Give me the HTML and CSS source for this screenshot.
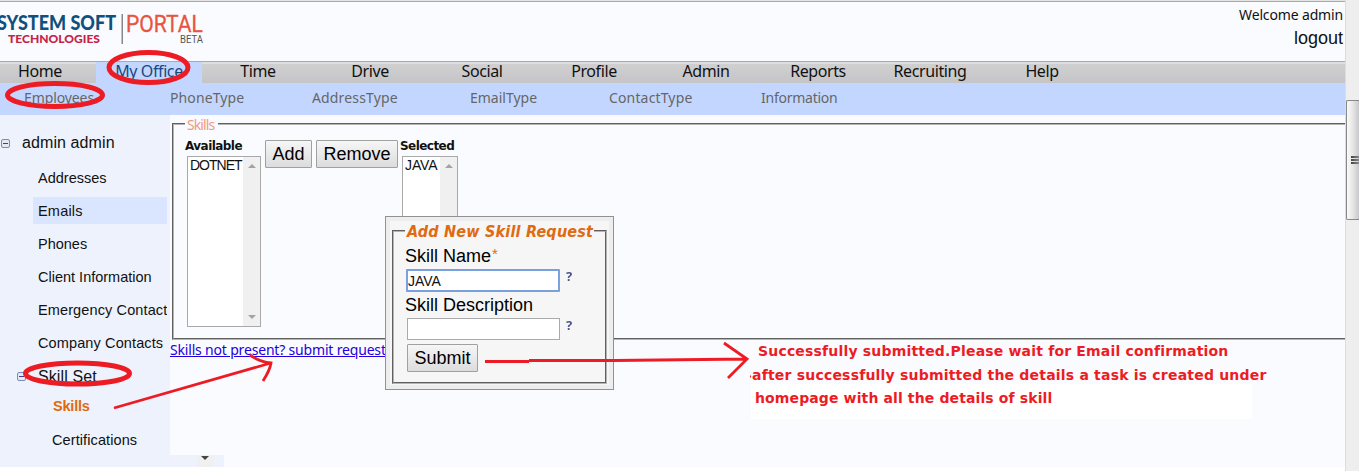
FILE: index.html
```
<!DOCTYPE html>
<html lang="en">
<head>
<meta charset="utf-8">
<title>System Soft Technologies Portal</title>
<link rel="stylesheet" href="styles.css">
</head>
<body>
<div class="window">
  <div class="page">
    <header class="header">
      <svg class="logo" width="210" height="48" viewBox="0 0 210 48">
        <text class="logo-name" x="-3" y="29.500" textLength="119" lengthAdjust="spacingAndGlyphs">SYSTEM SOFT</text>
        <text class="logo-tech" x="8" y="43" textLength="92" lengthAdjust="spacingAndGlyphs">TECHNOLOGIES</text>
        <rect class="logo-rule" x="121.500" y="14" width="1.500" height="30"/>
        <text class="logo-portal" x="126" y="31.500" textLength="77" lengthAdjust="spacingAndGlyphs">PORTAL</text>
        <text class="logo-beta" x="180" y="43" textLength="23" lengthAdjust="spacingAndGlyphs">BETA</text>
      </svg>
      <div class="account">
        <span class="welcome">Welcome admin</span>
        <a class="logout">logout</a>
      </div>
    </header>
    <nav class="nav">
      <a class="nav-item nav-home">Home</a>
      <a class="nav-item nav-active">My Office</a>
      <a class="nav-item">Time</a>
      <a class="nav-item">Drive</a>
      <a class="nav-item">Social</a>
      <a class="nav-item">Profile</a>
      <a class="nav-item">Admin</a>
      <a class="nav-item">Reports</a>
      <a class="nav-item">Recruiting</a>
      <a class="nav-item">Help</a>
    </nav>
    <nav class="subnav">
      <a class="sub-employees">Employees</a>
      <a class="sub-phone">PhoneType</a>
      <a class="sub-address">AddressType</a>
      <a class="sub-email">EmailType</a>
      <a class="sub-contact">ContactType</a>
      <a class="sub-info">Information</a>
    </nav>
    <div class="body">
      <aside class="sidebar">
        <div class="root"><i class="toggle"></i><span>admin admin</span></div>
        <a class="leaf">Addresses</a>
        <a class="leaf leaf-hover">Emails</a>
        <a class="leaf">Phones</a>
        <a class="leaf">Client Information</a>
        <a class="leaf leaf-wide">Emergency Contact</a>
        <a class="leaf leaf-wide">Company Contacts</a>
        <div class="group"><i class="toggle"></i><span>Skill Set</span></div>
        <a class="child child-active">Skills</a>
        <a class="child child-cert">Certifications</a>
      </aside>
      <main class="main">
        <section class="skills">
          <h2 class="legend">Skills</h2>
          <div class="picker">
            <div class="column column-available">
              <b class="caption">Available</b>
              <div class="list list-available"><span>DOTNET</span><div class="track"><i class="up"></i><i class="down"></i></div></div>
            </div>
            <button class="btn btn-add">Add</button>
            <button class="btn btn-remove">Remove</button>
            <div class="column column-selected">
              <b class="caption">Selected</b>
              <div class="list list-selected"><span>JAVA</span><div class="track"><i class="up"></i><i class="down"></i></div></div>
            </div>
          </div>
        </section>
        <a class="request-link">Skills not present? submit request</a>
        <div class="tail"><div class="tail-track"><i class="down down-dark"></i></div></div>
      </main>
    </div>
  </div>
  <div class="scrollbar"><div class="thumb"><i></i><i></i><i></i></div></div>
</div>

<div class="dialog">
  <div class="dialog-inner">
    <div class="dialog-box">
      <h3 class="dialog-title">Add New Skill Request</h3>
      <label class="label">Skill Name<sup>*</sup></label>
      <div class="field"><div class="input input-focus">JAVA</div><span class="hint">?</span></div>
      <label class="label">Skill Description</label>
      <div class="field"><div class="input"></div><span class="hint">?</span></div>
      <button class="btn btn-submit">Submit</button>
    </div>
  </div>
</div>

<div class="note">
  <p class="note-1">Successfully submitted.Please wait for Email confirmation</p>
  <p class="note-2">after successfully submitted the details a task is created under</p>
  <p class="note-3">homepage with all the details of skill</p>
</div>

<svg class="marks" width="1359" height="471" viewBox="0 0 1359 471">
  <ellipse cx="148.500" cy="67.500" rx="39.500" ry="15" stroke-width="5"/>
  <ellipse cx="55" cy="95" rx="47.500" ry="11.500" stroke-width="5"/>
  <ellipse cx="77.500" cy="373.500" rx="52" ry="10.500" stroke-width="5"/>
  <path d="M114 408L271 363M250 355Q260 362 271 363Q270 370 263 381"/>
  <path d="M485 361.500H529M529 360.500H615L747 359M724 343L747 359L728 378"/>
  <path d="M750 376.500H751" stroke-width="2"/>
</svg>
</body>
</html>
```
FILE: styles.css
```
* { box-sizing: border-box; }
body { margin: 0; width: 1359px; height: 471px; overflow: hidden; position: relative; background: #fff; color: #111; font-family: "Liberation Sans", Arial, sans-serif; }
.window { display: flex; height: 471px; }
.page { width: 1345px; height: 467px; background: #fafbff; overflow: hidden; }

.header { height: 61px; border-top: 1px solid #e3e3e3; display: flex; justify-content: space-between; box-shadow: inset 0 1px #aaa; }
.logo { margin-top: -1px; font-family: Lato, sans-serif; }
.logo-name { font-size: 20px; font-weight: 900; fill: #11507a; }
.logo-tech { font-size: 12px; font-weight: 900; fill: #c52348; }
.logo-rule { fill: #888; }
.logo-portal { font-family: Roboto, sans-serif; font-size: 23px; fill: #e8543f; stroke: #e8543f; stroke-width: 0.3px; }
.logo-beta { font-family: Roboto, sans-serif; font-size: 11px; fill: #555; }
.account { display: flex; flex-direction: column; align-items: flex-end; padding: 4px 2px 0 0; }
.welcome { font: 14px/20px "Noto Sans", sans-serif; letter-spacing: -0.15px; }
.logout { font-size: 18px; line-height: 24px; margin-top: 1px; }

.nav { height: 22px; display: flex; border-top: 1px solid #aaa; background: linear-gradient(#dedede 0 2px, #d0d0d1 2px, #c5c4c7); font: 16px/18px "Noto Sans", sans-serif; letter-spacing: -0.4px; }
.nav-item { width: 112px; text-align: center; }
.nav-home { width: 96px; padding-right: 16px; }
.nav-active { width: 106px; background: #c3d6ff; color: #17497f; }
.subnav { height: 32px; background: #c3d6ff; display: flex; padding-left: 24px; color: #666; font: 14px/30px "Noto Sans", sans-serif; letter-spacing: -0.1px; }
.sub-employees { width: 146px; }
.sub-phone { width: 142px; letter-spacing: 0.1px; }
.sub-address { width: 158px; letter-spacing: 0.15px; }
.sub-email { width: 139px; letter-spacing: 0; }
.sub-contact { width: 152px; letter-spacing: 0.15px; }
.sub-info { letter-spacing: -0.25px; }

.body { display: flex; height: 352px; }
.sidebar { width: 170px; background: #edf2fc; }
.root { display: flex; align-items: center; gap: 12px; height: 56px; padding-left: 1px; font-size: 16px; letter-spacing: 0.1px; }
.toggle { width: 9px; height: 9px; border: 1px solid #7b8bc0; border-radius: 2px; background: linear-gradient(#34429a, #34429a) center / 5px 1px no-repeat, #e4e8f2; }
.leaf { display: block; height: 27px; line-height: 28px; margin: 0 3px 6px 33px; padding-left: 5px; white-space: nowrap; overflow: hidden; font-size: 14.5px; }
.root + .leaf { margin-top: -7px; }
.leaf-hover { letter-spacing: 0.2px; background: #dae5ff; }
.leaf-wide { letter-spacing: 0.12px; }
.group { display: flex; align-items: center; gap: 12px; height: 29px; padding-left: 17px; font-size: 16px; letter-spacing: 0.1px; }
.child { display: block; height: 34px; line-height: 30px; padding-left: 53px; font-size: 14.5px; }
.child-active { color: #e06a10; font-weight: bold; letter-spacing: -0.2px; }
.child-cert { padding-left: 52px; letter-spacing: 0.1px; }

.main { flex: 1; padding-top: 8px; }
.skills { position: relative; height: 217px; margin-left: 2px; border: 2px groove #b4b4b4; border-right: 0; padding: 15px 0 0 11px; }
.legend { position: absolute; left: 11px; top: -9px; margin: 0; padding: 0 4px 0 2px; background: #fafbff; color: #f09a7e; font: 14px/18px "Noto Sans", sans-serif; letter-spacing: -0.9px; }
.picker { display: flex; align-items: flex-start; }
.column { display: flex; flex-direction: column; }
.column-available { width: 80px; }
.column-selected { width: 60px; margin-left: 2px; }
.caption { font: bold 12px/13px "DejaVu Sans", sans-serif; letter-spacing: -0.55px; height: 16px; white-space: nowrap; }
.list { display: flex; justify-content: space-between; height: 171px; border: 1px solid #a9a9a9; background: #fff; margin-left: 2px; padding-left: 2px; font-size: 14px; line-height: 17px; }
.list-available { width: 74px; }
.list-selected { width: 56px; }
.list span { letter-spacing: -1px; width: 53px; }
.list-selected span { width: 35px; letter-spacing: -0.1px; }
.track { width: 17px; background: #f0f0f0; display: flex; flex-direction: column; justify-content: space-between; align-items: center; padding: 7px 0; }
.up, .down { border: 4px solid transparent; height: 0; width: 0; }
.up { border-top: 0; border-bottom-color: #a3a3a3; }
.down { border-bottom: 0; border-top-color: #a3a3a3; }
.down-dark { display: block; border-top-color: #444; }
.btn { height: 28px; padding: 0; border: 1px solid #a0a0a0; border-radius: 1px; background: linear-gradient(#f6f6f6, #dcdcdc); color: #000; font: 18px "Liberation Sans", Arial, sans-serif; }
.btn-add { width: 47px; }
.btn-remove { width: 82px; margin-left: 4px; }
.request-link { display: block; height: 20px; margin-bottom: 95px; color: #20d; text-decoration: underline; white-space: nowrap; font: 14px/20px "Noto Sans", sans-serif; letter-spacing: -0.18px; }
.tail { width: 54px; height: 12px; background: #edf2fc; padding-left: 27px; }
.tail-track { width: 17px; height: 12px; background: #f0f0f0; padding: 1px 0 0 4px; }

.scrollbar { width: 14px; height: 471px; background: #eee; border-left: 1px solid #ddd; padding-top: 100px; }
.thumb { height: 120px; border: 1px solid #888; border-right: 0; border-radius: 2px 0 0 2px; background: linear-gradient(90deg, #fafafa, #e8e8e8 45%, #c8c8cc); display: flex; flex-direction: column; align-items: flex-end; justify-content: center; gap: 1px; }
.thumb i { width: 8px; height: 2px; background: linear-gradient(90deg, #444, #888); }

.dialog { position: absolute; left: 385px; top: 216px; width: 229px; height: 174px; border: 1px solid #929292; background: #ededed; padding: 4px; }
.dialog-inner { height: 164px; background: #f6f6f6; padding: 9px 2px 1px; }
.dialog-box { position: relative; height: 154px; border: 2px groove #b4b4b4; padding: 12px 0 0 13px; }
.dialog-title { position: absolute; left: 11px; top: -11px; width: 189px; margin: 0; padding: 0 2px; background: #f6f6f6; white-space: nowrap; color: #e06a10; font: italic bold 16px/22px "DejaVu Sans Condensed", "DejaVu Sans", sans-serif; font-stretch: condensed; letter-spacing: 0.2px; }
.label { display: block; height: 24px; line-height: 24px; font-size: 18px; margin-left: -2px; color: #000; }
.label sup { font-size: 15px; line-height: 0; color: #e06a10; vertical-align: 3px; margin-left: 1px; }
.field { display: flex; height: 25px; gap: 6px; padding-top: 1px; }
.input { width: 153px; height: 22px; border: 1px solid #aaa; background: #fff; font-size: 14px; line-height: 21px; padding-left: 1px; }
.input-focus { width: 154px; height: 23px; margin-left: -1px; border: 2px solid #7aa0de; border-radius: 1px; line-height: 20px; padding-left: 0; }
.hint { font: bold 13px/15px "Noto Sans", sans-serif; background: linear-gradient(#46508a 70%, #c02040 70%); background-clip: text; color: transparent; }
.btn-submit { width: 71px; margin-top: 2px; display: block; }

.note { position: absolute; left: 751px; top: 341px; width: 501px; height: 78px; background: linear-gradient(transparent 43px, #fff 43px); color: #ed1c24; white-space: nowrap; font: bold 14px/20px "DejaVu Sans", sans-serif; }
.note p { margin: 0; height: 23.500px; line-height: 20px; }
.note-1 { padding-left: 7px; letter-spacing: 0.18px; }
.note p.note-2 { padding-left: 1px; letter-spacing: 0.2px; line-height: 21px; }
.note-3 { padding-left: 4px; letter-spacing: 0.12px; }
.marks { position: absolute; left: 0; top: 0; fill: none; stroke: #ed1c24; stroke-width: 2.800; }
```
